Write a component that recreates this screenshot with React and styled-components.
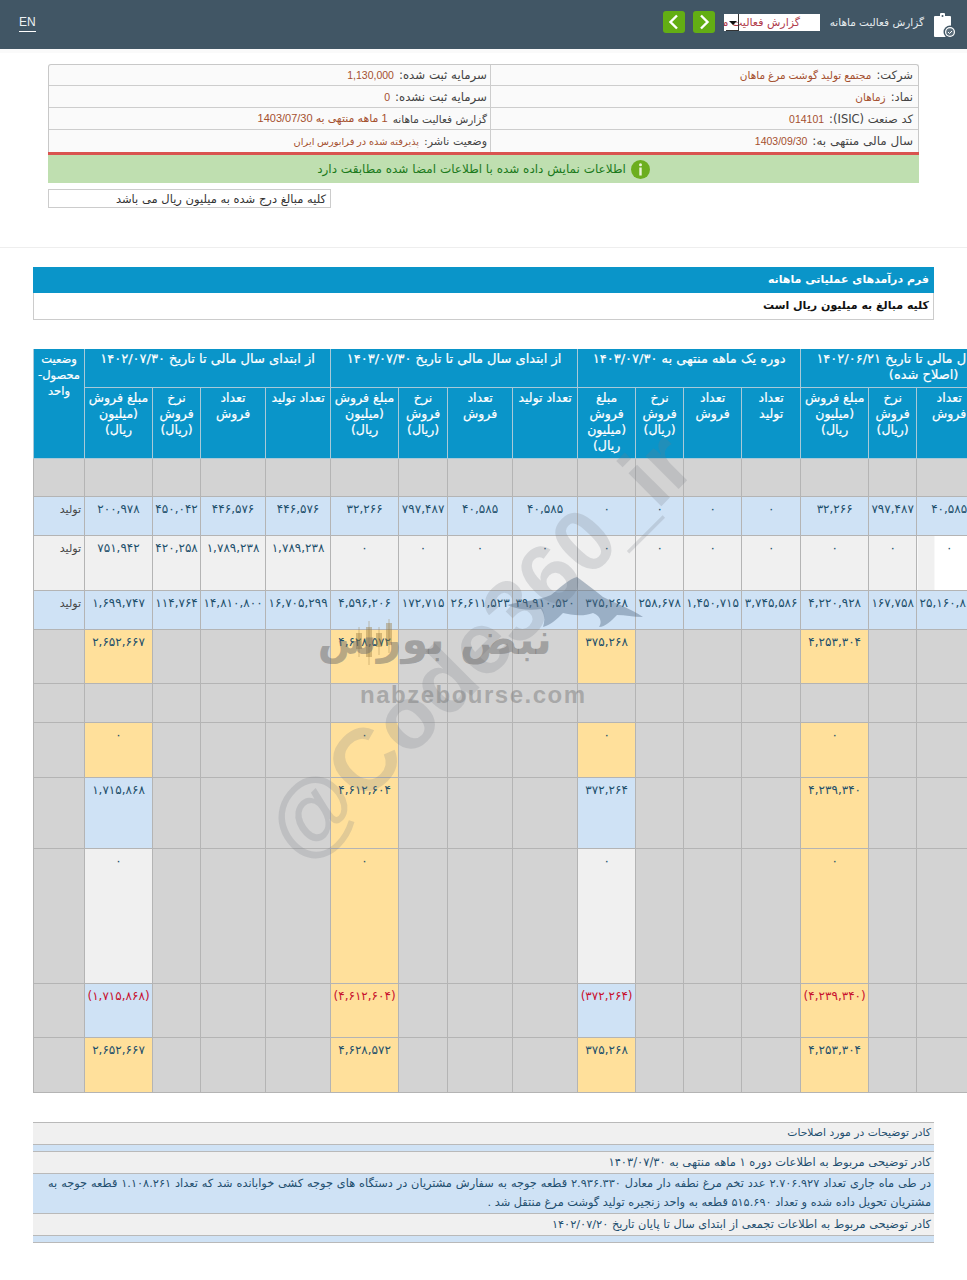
import styled, { createGlobalStyle } from "styled-components";

const G = createGlobalStyle`
  html, body { margin: 0; padding: 0; background: #fff; }
  body { font-family: "DejaVu Sans", Tahoma, sans-serif; font-size: 11px; overflow-x: hidden; }
  * { box-sizing: border-box; }
`;

const tones = {
  blue: "#cfe2f5",
  light: "#f0f0f0",
  grey: "#d3d3d3",
  yellow: "#ffe09b",
};

const widths = [65, 65, 48, 68, 59, 58, 48, 58, 65, 65, 49, 68, 65, 65, 48, 68, 51];

const subHeads = ["تعداد تولید", "تعداد فروش", "نرخ فروش (ریال)", "مبلغ فروش (میلیون ریال)"];

const groups = [
  { title: "از ابتدای سال مالی تا تاریخ ۱۴۰۲/۰۶/۲۱ (اصلاح شده)" },
  { title: "دوره یک ماهه منتهی به ۱۴۰۳/۰۷/۳۰" },
  { title: "از ابتدای سال مالی تا تاریخ ۱۴۰۳/۰۷/۳۰" },
  { title: "از ابتدای سال مالی تا تاریخ ۱۴۰۲/۰۷/۳۰" },
];

const zero = ["۰", "۰", "۰", "۰"];

const productRows = [
  { h: 38, tone: "grey", cells: Array(16).fill(""), status: "" },
  {
    h: 39, tone: "blue", status: "تولید",
    cells: ["۴۰,۵۸۵", "۴۰,۵۸۵", "۷۹۷,۴۸۷", "۳۲,۲۶۶", ...zero, "۴۰,۵۸۵", "۴۰,۵۸۵", "۷۹۷,۴۸۷", "۳۲,۲۶۶", "۴۴۶,۵۷۶", "۴۴۶,۵۷۶", "۴۵۰,۰۴۲", "۲۰۰,۹۷۸"],
  },
  {
    h: 55, tone: "light", status: "تولید", patch: true,
    cells: [...zero, ...zero, ...zero, "۱,۷۸۹,۲۳۸", "۱,۷۸۹,۲۳۸", "۴۲۰,۲۵۸", "۷۵۱,۹۴۲"],
  },
  {
    h: 39, tone: "blue", status: "تولید",
    cells: ["۲۵,۱۶۰,۸۰۰", "۲۵,۱۶۰,۸۰۰", "۱۶۷,۷۵۸", "۴,۲۲۰,۹۲۸", "۳,۷۴۵,۵۸۶", "۱,۴۵۰,۷۱۵", "۲۵۸,۶۷۸", "۳۷۵,۲۶۸", "۳۹,۹۱۰,۵۲۰", "۲۶,۶۱۱,۵۲۳", "۱۷۲,۷۱۵", "۴,۵۹۶,۲۰۶", "۱۶,۷۰۵,۲۹۹", "۱۴,۸۱۰,۸۰۰", "۱۱۴,۷۶۴", "۱,۶۹۹,۷۴۷"],
  },
];

// total rows only fill the amount column of each group
const totalRows = [
  { h: 54, amounts: [["۴,۲۵۳,۳۰۴", "yellow"], ["۳۷۵,۲۶۸", "yellow"], ["۴,۶۲۸,۵۷۲", "yellow"], ["۲,۶۵۲,۶۶۷", "yellow"]] },
  { h: 39, amounts: [["", "grey"], ["", "grey"], ["", "grey"], ["", "grey"]] },
  { h: 55, amounts: [["۰", "yellow"], ["۰", "yellow"], ["۰", "yellow"], ["۰", "yellow"]] },
  { h: 71, amounts: [["۴,۲۳۹,۳۴۰", "yellow"], ["۳۷۲,۲۶۴", "blue"], ["۴,۶۱۲,۶۰۴", "yellow"], ["۱,۷۱۵,۸۶۸", "blue"]] },
  { h: 135, amounts: [["۰", "yellow"], ["۰", "light"], ["۰", "yellow"], ["۰", "light"]] },
  { h: 54, red: true, amounts: [["(۴,۲۳۹,۳۴۰)", "yellow"], ["(۳۷۲,۲۶۴)", "blue"], ["(۴,۶۱۲,۶۰۴)", "yellow"], ["(۱,۷۱۵,۸۶۸)", "blue"]] },
  { h: 55, amounts: [["۴,۲۵۳,۳۰۴", "yellow"], ["۳۷۵,۲۶۸", "yellow"], ["۴,۶۲۸,۵۷۲", "yellow"], ["۲,۶۵۲,۶۶۷", "yellow"]] },
];

const infoRows = [
  { h: 21, rSize: 11.5, lSize: 11.8, lValSize: 10.5, rLabel: "شرکت:", rValue: "مجتمع تولید گوشت مرغ ماهان", lLabel: "سرمایه ثبت شده:", lValue: "1,130,000" },
  { h: 22, rSize: 11.5, lSize: 11.8, lValSize: 10.5, rLabel: "نماد:", rValue: "زماهان", lLabel: "سرمایه ثبت نشده:", lValue: "0" },
  { h: 22, rSize: 11.5, lSize: 10.5, lValSize: 11, rLabel: "کد صنعت (ISIC):", rValue: "014101", lLabel: "گزارش فعالیت ماهانه", lValue: "1 ماهه منتهی به 1403/07/30" },
  { h: 22, rSize: 12, lSize: 11, lValSize: 9.8, rLabel: "سال مالی منتهی به:", rValue: "1403/09/30", lLabel: "وضعیت ناشر:", lValue: "پذیرفته شده در فرابورس ایران" },
];

const TopBar = styled.header`
  height: 49px;
  background: #415665;
  display: flex;
  align-items: center;
  direction: rtl;
  padding: 0 11px 0 19px;
  box-shadow: 0 4px 0 #fafafa;
`;

const TopTitle = styled.span`
  color: #e6ecef;
  font-size: 10.5px;
  margin: 0 8px 5px 8px;
  width: 96px;
  white-space: nowrap;
`;

const FakeSelect = styled.div`
  position: relative;
  width: 96px;
  height: 17px;
  margin: 0 0 5px 9px;
  background: #fff;
  color: #b03a4a;
  font-size: 11px;
  line-height: 17px;
  padding-right: 20px;
  overflow: hidden;
  white-space: nowrap;
`;

const SelectCaret = styled.span`
  position: absolute;
  left: 2px;
  top: 0;
  width: 13px;
  height: 17px;
  border-bottom: 1px solid #333;
  border-right: 1px solid #333;

  &::before {
    content: "";
    position: absolute;
    left: 3px;
    top: 7px;
    border: 4px solid transparent;
    border-top: 4px solid #111;
    border-bottom: 0;
  }
`;

const NavBtn = styled.button`
  width: 22px;
  height: 22px;
  margin: 0 0 5px 8px;
  padding: 0;
  border: 0;
  border-radius: 3px;
  background: #63ae14;
  display: flex;
  align-items: center;
  justify-content: center;
`;

const EnLink = styled.a`
  margin-right: auto;
  color: #eef2f4;
  font-family: "Liberation Sans", sans-serif;
  font-size: 12px;
  line-height: 15px;
  margin-bottom: 2px;
  padding-bottom: 1px;
  border-bottom: 1px solid #fff;
`;

const Content = styled.main`
  padding: 15px 48px 0;
  direction: rtl;
`;

const InfoTable = styled.div`
  border: 1px solid #c8c8c8;
  border-bottom: 0;
  border-radius: 3px 3px 0 0;
  background: #fafafa;
  height: 88px;
`;

const InfoRow = styled.div`
  display: grid;
  grid-template-columns: 427px 1fr;
  height: ${(p) => p.$h}px;
  border-bottom: 1px solid #cdcdcd;

  &:last-child { border-bottom: 0; }
`;

const InfoCell = styled.div`
  display: flex;
  align-items: center;
  gap: 5px;
  padding: 0 5px;
  color: #444;
  font-size: ${(p) => p.$size}px;
  white-space: nowrap;

  & + & {
    border-right: 1px solid #cdcdcd;
    padding-right: 3px;
  }
`;

const InfoValue = styled.span`
  font-family: "Liberation Sans", "DejaVu Sans", sans-serif;
  color: #a5502f;
  font-size: ${(p) => p.$size || 10.5}px;
`;

const RedLine = styled.div`
  height: 3px;
  background: #d9534f;
`;

const OkBar = styled.div`
  height: 28px;
  background: #bfdfb0;
  color: #1c7a1c;
  font-size: 12px;
  display: flex;
  align-items: center;
  justify-content: center;
  gap: 5px;
`;

const AmountNote = styled.div`
  width: 283px;
  height: 19px;
  margin: 6px auto 0 0;
  border: 1px solid #ccc;
  padding: 0 4px;
  font-size: 11.5px;
  line-height: 18px;
  color: #333;
  white-space: nowrap;
`;

const Divider = styled.hr`
  margin: 39px 0 0;
  border: 0;
  border-top: 1px solid #eee;
`;

const Section = styled.section`
  position: relative;
  direction: rtl;
  padding: 19px 33px 0;
`;

const FormTitle = styled.div`
  height: 26px;
  background: #0a95c9;
  color: #fff;
  font-size: 11px;
  font-weight: 700;
  line-height: 26px;
  padding: 0 5px;
`;

const FormNote = styled.div`
  height: 27px;
  border: 1px solid #ccc;
  border-top: 0;
  font-size: 11px;
  font-weight: 700;
  line-height: 26px;
  padding: 0 4px;
  color: #111;
`;

const TableClip = styled.div`
  position: relative;
  margin: 29px -33px 0 0;
  overflow: hidden;
  direction: ltr;
`;

const Report = styled.table`
  direction: rtl;
  table-layout: fixed;
  width: 1013px;
  border-collapse: collapse;
`;

const GroupHead = styled.th`
  height: ${(p) => p.$h}px;
  background: #0a95c9;
  border: 1px solid #a9c9d8;
  border-top: 0;
  color: #fff;
  font-size: 13px;
  font-weight: 400;
  line-height: 16px;
  padding: 2px 3px;
  vertical-align: top;
  -webkit-text-stroke: 0.2px #fff;
`;

const SubHead = styled(GroupHead)`
  font-size: 12.5px;
`;

const StatusHead = styled(GroupHead)`
  font-size: 11.5px;
  padding: 2px 0;
`;

const Cell = styled.td`
  height: ${(p) => p.$h}px;
  background: ${(p) => p.$bg};
  border: 1px solid #b4b4b4;
  color: ${(p) => (p.$red ? "#c8102e" : "#1d4f6b")};
  font-size: 12px;
  line-height: 15px;
  padding: 5px 0;
  text-align: center;
  vertical-align: top;
  white-space: nowrap;
  overflow: hidden;
`;

const StatusCell = styled(Cell)`
  font-size: 11px;
  text-align: right;
  padding-right: 3px;
  color: #444;
`;

const PatchedCell = styled(Cell)`
  background: linear-gradient(to right, ${tones.light} 17px, #fff 17px);
`;

const Notes = styled.section`
  margin-top: 29px;
  border-top: 1px solid #b9b9b9;
  border-bottom: 1px solid #b9b9b9;
  color: #1f4f6f;
`;

const NoteRow = styled.div`
  min-height: ${(p) => p.$h}px;
  background: ${(p) => tones[p.$tone]};
  border-bottom: 1px solid #b9b9b9;
  padding: 0 3px 0 ${(p) => p.$left || 3}px;
  font-size: ${(p) => p.$size || 11.35}px;
  line-height: ${(p) => (p.$h > 30 ? 19 : p.$h - 2)}px;
  text-align: justify;

  &:last-child { border-bottom: 0; }
`;

const Bottom = styled.div`
  height: 38px;
`;

const Watermark = styled.div`
  position: absolute;
  inset: 0;
  overflow: hidden;
  pointer-events: none;
  direction: ltr;
`;

const DiagonalMark = styled.span`
  position: absolute;
  left: 248px;
  top: 444px;
  font-family: "Liberation Sans", sans-serif;
  font-size: 88px;
  font-weight: 700;
  color: rgba(120, 125, 130, 0.22);
  white-space: nowrap;
  transform: rotate(-45deg);
  transform-origin: 0 50%;
`;

const BullLogo = styled.svg`
  position: absolute;
  left: 474px;
  top: 228px;
`;

const Candles = styled.svg`
  position: absolute;
  left: 319px;
  top: 270px;
`;

const BrandFa = styled.span`
  position: absolute;
  left: 287px;
  top: 262px;
  width: 232px;
  text-align: center;
  direction: rtl;
  font-size: 43px;
  font-weight: 700;
  line-height: 56px;
  color: rgba(105, 105, 105, 0.48);
  white-space: nowrap;
`;

const BrandEn = styled.span`
  position: absolute;
  left: 327px;
  top: 332px;
  font-family: "Liberation Sans", sans-serif;
  font-size: 24px;
  font-weight: 700;
  letter-spacing: 1.5px;
  color: rgba(125, 125, 125, 0.5);
`;

function Chevron({ left }) {
  return (
    <svg width="14" height="16" viewBox="0 0 14 16" fill="none" stroke="#fff" strokeWidth="2.4">
      <path d={left ? "M10 1.5 3.5 8l6.5 6.5" : "M4 1.5 10.5 8 4 14.5"} />
    </svg>
  );
}

function ClipIcon() {
  return (
    <svg width="24" height="28" viewBox="0 0 24 28">
      <rect x="2" y="5" width="17" height="21" rx="1" fill="#fff" />
      <rect x="8" y="2" width="5" height="5" rx="1" fill="#fff" />
      <circle cx="10.5" cy="5" r="1" fill="#415665" />
      <circle cx="18" cy="21" r="6.5" fill="#415665" />
      <circle cx="18" cy="21" r="5" fill="#fff" />
      <circle cx="18" cy="21" r="3.8" fill="#5d6f7c" />
      <path d="M16 21l1.5 1.5 2.5-2.5" fill="none" stroke="#fff" strokeWidth="1" />
    </svg>
  );
}

function InfoDot() {
  return (
    <svg width="19" height="19" viewBox="0 0 19 19">
      <circle cx="9.5" cy="9.5" r="9.5" fill="#6cae1e" />
      <rect x="8.3" y="7.5" width="2.4" height="8" fill="#eaf5d8" />
      <circle cx="9.5" cy="4.8" r="1.5" fill="#eaf5d8" />
    </svg>
  );
}

function CandleBars() {
  const bars = [[4, 14, 16], [14, 8, 30], [24, 14, 14], [34, 4, 22]];
  return bars.map(([x, y, h]) => (
    <g key={x}>
      <rect x={x} y={y} width="6" height={h} />
      <rect x={x + 2.5} y={y - 6} width="1" height={h + 14} />
    </g>
  ));
}

export default function App() {
  return (
    <>
      <G />
      <TopBar>
        <ClipIcon />
        <TopTitle>گزارش فعالیت ماهانه</TopTitle>
        <FakeSelect>
          گزارش فعالیت ماهانه
          <SelectCaret />
        </FakeSelect>
        <NavBtn><Chevron /></NavBtn>
        <NavBtn><Chevron left /></NavBtn>
        <EnLink>EN</EnLink>
      </TopBar>

      <Content>
        <InfoTable>
          {infoRows.map((r) => (
            <InfoRow key={r.rLabel} $h={r.h}>
              <InfoCell $size={r.rSize}>
                {r.rLabel}
                <InfoValue>{r.rValue}</InfoValue>
              </InfoCell>
              <InfoCell $size={r.lSize}>
                {r.lLabel}
                <InfoValue $size={r.lValSize}>{r.lValue}</InfoValue>
              </InfoCell>
            </InfoRow>
          ))}
        </InfoTable>
        <RedLine />
        <OkBar>
          <InfoDot />
          اطلاعات نمایش داده شده با اطلاعات امضا شده مطابقت دارد
        </OkBar>
        <AmountNote>کلیه مبالغ درج شده به میلیون ریال می باشد</AmountNote>
      </Content>

      <Divider />

      <Section>
        <FormTitle>فرم درآمدهای عملیاتی ماهانه</FormTitle>
        <FormNote>کلیه مبالغ به میلیون ریال است</FormNote>

        <TableClip>
          <Report>
            <colgroup>
              {widths.map((w, i) => <col key={i} style={{ width: w }} />)}
            </colgroup>
            <thead>
              <tr>
                {groups.map((g) => (
                  <GroupHead key={g.title} colSpan={4} $h={38}>{g.title}</GroupHead>
                ))}
                <StatusHead rowSpan={2} $h={38}>وضعیت محصول-واحد</StatusHead>
              </tr>
              <tr>
                {groups.flatMap((g, gi) => subHeads.map((s) => (
                  <SubHead key={gi + s} $h={71}>{s}</SubHead>
                )))}
              </tr>
            </thead>
            <tbody>
              {productRows.map((r, ri) => (
                <tr key={ri}>
                  {r.cells.map((c, i) => (
                    r.patch && i === 1
                      ? <PatchedCell key={i} $h={r.h}>{c}</PatchedCell>
                      : <Cell key={i} $h={r.h} $bg={tones[r.tone]}>{c}</Cell>
                  ))}
                  <StatusCell $h={r.h} $bg={tones[r.tone]}>{r.status}</StatusCell>
                </tr>
              ))}
              {totalRows.map((r, ri) => (
                <tr key={ri}>
                  {r.amounts.flatMap(([value, tone], gi) => [
                    <Cell key={gi + "a"} $h={r.h} $bg={tones.grey} />,
                    <Cell key={gi + "b"} $h={r.h} $bg={tones.grey} />,
                    <Cell key={gi + "c"} $h={r.h} $bg={tones.grey} />,
                    <Cell key={gi + "d"} $h={r.h} $bg={tones[tone]} $red={r.red}>{value}</Cell>,
                  ])}
                  <Cell $h={r.h} $bg={tones.grey} />
                </tr>
              ))}
            </tbody>
          </Report>
          <Watermark>
            <DiagonalMark>@Code360_ir</DiagonalMark>
            <BullLogo width="140" height="56" viewBox="0 0 140 56">
              <path
                fill="rgba(80,105,130,0.42)"
                d="M0 28 C14 24 30 24 44 18 C54 10 62 2 70 0 C78 6 86 12 96 20 C108 26 124 32 136 40 C126 40 118 38 110 38 C104 44 98 50 92 50 C96 44 92 38 86 36 C76 40 64 38 56 36 C50 42 44 48 36 50 C38 44 38 38 34 32 C22 34 10 32 0 28Z"
              />
            </BullLogo>
            <Candles width="46" height="64" viewBox="0 0 46 64" fill="rgba(150,120,60,0.4)">
              <CandleBars />
            </Candles>
            <BrandFa>نبض بورس</BrandFa>
            <BrandEn>nabzebourse.com</BrandEn>
          </Watermark>
        </TableClip>

        <Notes>
          <NoteRow $h={22} $tone="light" $size={10.8}>کادر توضیحات در مورد اصلاحات</NoteRow>
          <NoteRow $h={7} $tone="blue" />
          <NoteRow $h={22} $tone="light" $size={11.5}>کادر توضیحی مربوط به اطلاعات دوره ۱ ماهه منتهی به ۱۴۰۳/۰۷/۳۰</NoteRow>
          <NoteRow $h={40} $tone="blue" $left={15}>
            در طی ماه جاری تعداد ۲.۷۰۶.۹۲۷ عدد تخم مرغ نطفه دار معادل ۲.۹۳۶.۳۳۰ قطعه جوجه به سفارش مشتریان در دستگاه های جوجه کشی خوابانده شد که تعداد ۱.۱۰۸.۲۶۱ قطعه جوجه به مشتریان تحویل داده شده و تعداد ۵۱۵.۶۹۰ قطعه به واحد زنجیره تولید گوشت مرغ منتقل شد .
          </NoteRow>
          <NoteRow $h={22} $tone="light">کادر توضیحی مربوط به اطلاعات تجمعی از ابتدای سال تا پایان تاریخ ۱۴۰۲/۰۷/۲۰</NoteRow>
          <NoteRow $h={6} $tone="blue" />
        </Notes>
        <Bottom />
      </Section>
    </>
  );
}
